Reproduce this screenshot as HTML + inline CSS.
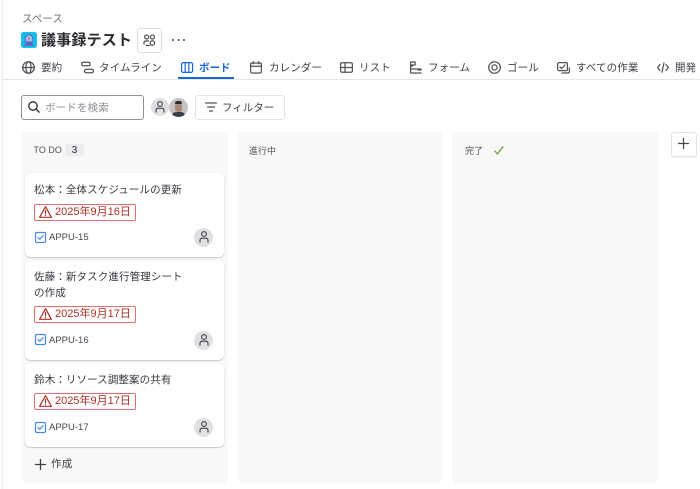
<!DOCTYPE html>
<html lang="ja"><head><meta charset="utf-8"><style>
html,body{margin:0;padding:0;width:700px;height:489px;overflow:hidden;background:#fff}
body{position:relative;font-family:"Liberation Sans","Noto Sans CJK JP",sans-serif;color:#3c3f45;filter:blur(.3px)}
.a{position:absolute;white-space:nowrap}
svg{position:absolute;overflow:visible;fill:none;stroke-linecap:round;stroke-linejoin:round}
.tab{font-size:10.5px;line-height:14px;top:61px;color:#3c3f45;letter-spacing:.1px}
.i{stroke:#505258;stroke-width:1.25}
.col{position:absolute;top:132px;height:351px;background:#f8f8f8;border-radius:6px}
.card{position:absolute;left:25px;width:199px;background:#fff;border-radius:5px;box-shadow:0 1px 1px #0000002e,0 0 1px #00000022}
.t{position:absolute;left:9px;font-size:10.5px;line-height:15px;color:#36393f;letter-spacing:.12px;white-space:nowrap}
.due{position:absolute;left:9px;width:100px;height:15px;border:1px solid #e0716a;border-radius:2px;color:#ae2e24;font-size:11px;line-height:15px;}
.due span{position:absolute;left:20px;top:0;white-space:nowrap}
.id{position:absolute;left:24px;font-size:9.5px;line-height:12px;color:#44474d;white-space:nowrap}
.av{position:absolute;left:169px;width:19px;height:19px;border-radius:50%;background:#dfe0e2}
.hd{font-size:9px;line-height:12px;color:#505258;top:145px}
</style></head><body>
<div class="a" style="left:2px;top:0;width:1px;height:489px;background:#ececee"></div>
<div class="a" style="left:2px;top:79px;width:698px;height:1px;background:#e4e5e7"></div>
<div class="a" style="left:22px;top:13px;font-size:10.5px;line-height:13px;color:#6b6e76">スペース</div>

<svg style="left:21px;top:32px" width="16" height="16" viewBox="0 0 16 16"><rect width="16" height="16" rx="2.5" fill="#12c2e6"/><path d="M2.500 13.500c1.500-.5 2.500-3.500 5.500-3.500s4 3 5.500 3.500c-1 .8-2 .8-3 .3H5.500c-1 .5-2 .5-3-.3z" fill="#6a5cc0"/><path d="M4.200 6.500a3.800 3.800 0 1 1 7.600 0v3.500H4.200z" fill="#8fc4ec" stroke="#4f5ec4" stroke-width="1"/><circle cx="8" cy="6.500" r="1.500" fill="#e58a78"/></svg>
<div class="a" style="left:41px;top:31px;font-size:15px;line-height:20px;font-weight:700;color:#292a2e;letter-spacing:.2px">議事録テスト</div>
<div class="a" style="left:137px;top:28px;width:23px;height:23px;border:1px solid #dddee1;border-radius:3px"></div>
<svg class="i" style="left:143px;top:34px" width="13" height="13" viewBox="0 0 13 13"><circle cx="3.600" cy="3" r="2"/><circle cx="9.400" cy="3" r="2"/><circle cx="9.400" cy="9" r="2.200"/><path d="M1 10V8.500C1 7.500 2 7 3 7h2.500M3 11.500h3.500"/></svg>
<div class="a" style="left:172px;top:39px;width:2.200px;height:2.200px;border-radius:50%;background:#44474d;box-shadow:5.500px 0 #44474d,11px 0 #44474d"></div>

<svg class="i" style="left:22px;top:61px" width="13" height="13" viewBox="0 0 13 13"><circle cx="6.500" cy="6.500" r="5.800"/><ellipse cx="6.500" cy="6.500" rx="2.600" ry="5.800"/><path d="M.7 6.500h11.600"/></svg>
<div class="a tab" style="left:41px">要約</div>
<svg class="i" style="left:81px;top:61px" width="13" height="13" viewBox="0 0 13 13"><rect x=".6" y="1.200" width="8.500" height="3.600" rx="1.600"/><rect x="3.600" y="8.200" width="8.800" height="3.600" rx="1.600"/></svg>
<div class="a tab" style="left:99px">タイムライン</div>
<svg style="left:181px;top:62px;stroke:#1868db;stroke-width:1.2" width="12" height="11" viewBox="0 0 12 11"><rect x=".6" y=".6" width="11" height="9.800" rx="1.600"/><path d="M4.200.6v9.800M7.800.6v9.800"/></svg>
<div class="a tab" style="left:199px;color:#1868db;font-weight:700;letter-spacing:0">ボード</div>
<div class="a" style="left:178px;top:77px;width:56px;height:2px;background:#1868db"></div>
<svg class="i" style="left:250px;top:61px" width="12" height="13" viewBox="0 0 12 13"><rect x=".6" y="2" width="10.800" height="10" rx="1.400"/><path d="M.6 5.200h10.800M3.300.6v2.200M8.700.6v2.200"/></svg>
<div class="a tab" style="left:269px">カレンダー</div>
<svg class="i" style="left:340px;top:62px" width="13" height="11" viewBox="0 0 13 11"><rect x=".6" y=".8" width="11.800" height="9.400" rx="1.400"/><path d="M.6 5.500h11.800M5 .8v9.400"/></svg>
<div class="a tab" style="left:359px">リスト</div>
<svg class="i" style="left:410px;top:61px" width="12" height="13" viewBox="0 0 12 13"><path d="M.6 1h4.500v3H.6zM.6 5h2M.6 5v3h10.500M.6 9v3h10.500M8 9h3.100"/></svg>
<div class="a tab" style="left:428px">フォーム</div>
<svg class="i" style="left:488px;top:61px" width="13" height="13" viewBox="0 0 13 13"><circle cx="6.500" cy="6.500" r="5.800"/><circle cx="6.500" cy="6.500" r="2.600"/></svg>
<div class="a tab" style="left:507px">ゴール</div>
<svg class="i" style="left:557px;top:62px" width="13" height="12" viewBox="0 0 13 12"><rect x=".6" y=".6" width="9.800" height="8" rx="1.400"/><path d="M3 5l1.600 1.600L8 3M5 11h6.400l1-1V6"/></svg>
<div class="a tab" style="left:576px">すべての作業</div>
<svg class="i" style="left:657px;top:62px" width="12" height="11" viewBox="0 0 12 11"><path d="M3 2.500L.6 5.500 3 8.500M9 2.500l2.400 3-2.400 3M7 .8L5 10.200"/></svg>
<div class="a tab" style="left:675px">開発</div>

<div class="a" style="left:21px;top:95px;width:121px;height:23px;border:1px solid #8c8f97;border-radius:3px"></div>
<svg style="left:28px;top:101px;stroke:#292a2e;stroke-width:1.3" width="12" height="12" viewBox="0 0 12 12"><circle cx="5" cy="5" r="4.200"/><path d="M8 8l3.200 3.200"/></svg>
<div class="a" style="left:45px;top:101px;font-size:10.5px;line-height:14px;color:#8c8f97;letter-spacing:.15px">ボードを検索</div>

<div class="a" style="left:151px;top:98px;width:18px;height:18px;border-radius:50%;background:#dfe0e2"></div>
<svg class="i" style="left:155px;top:101px" width="10" height="12" viewBox="0 0 10 12"><circle cx="5" cy="3" r="2.400"/><path d="M1 11V9.500C1 8 2 7.200 3.200 7.200h3.600C8 7.200 9 8 9 9.500V11"/></svg>
<div class="a" style="left:169px;top:98px;width:19px;height:19px;border-radius:50%;background:#c4c4c2;overflow:hidden">
<div class="a" style="left:3px;top:14px;width:13px;height:6px;background:#3a3f4c;border-radius:4px 4px 0 0"></div>
<div class="a" style="left:6px;top:5px;width:7px;height:9px;background:#a98a76;border-radius:3px"></div>
<div class="a" style="left:6px;top:3px;width:7px;height:3px;background:#2b2c30;border-radius:3px 3px 1px 1px"></div></div>

<div class="a" style="left:195px;top:95px;width:88px;height:23px;border:1px solid #e2e3e5;border-radius:3px"></div>
<svg class="i" style="left:205px;top:102px" width="12" height="10" viewBox="0 0 12 10"><path d="M.6 1h10.800M2.600 5h6.800M4.600 9h2.800"/></svg>
<div class="a" style="left:222px;top:101px;font-size:10.5px;line-height:14px;color:#3c3f45">フィルター</div>

<div class="col" style="left:21px;width:207px"></div>
<div class="col" style="left:237px;width:206px"></div>
<div class="col" style="left:452px;width:207px"></div>
<div class="a hd" style="left:33.500px;top:144px">TO DO</div>
<div class="a" style="left:65px;top:144px;width:19px;height:12px;background:#ebecee;border-radius:2px;font-size:10px;line-height:13px;text-align:center;color:#292a2e">3</div>
<div class="a hd" style="left:249px">進行中</div>
<div class="a hd" style="left:465px">完了</div>
<svg style="left:494px;top:146px;stroke:#6a9a23;stroke-width:1.2" width="10" height="9" viewBox="0 0 10 9"><path d="M.8 5l2.600 3L9 .8"/></svg>
<div class="a" style="left:671px;top:132px;width:24px;height:23px;border:1px solid #e2e3e5;border-radius:3px;box-shadow:0 1px 1px #0000000f"></div>
<svg style="left:678px;top:138px;stroke:#44474d;stroke-width:1.2" width="11" height="11" viewBox="0 0 11 11"><path d="M5.500.5v10M.5 5.500h10"/></svg>

<div class="card" style="top:173px;height:84px">
<div class="t" style="top:10px">松本：全体スケジュールの更新</div>
<div class="due" style="top:31px"><span>2025年9月16日</span><svg style="left:4px;top:1px;stroke:#ae2e24;stroke-width:1.2" width="13" height="12" viewBox="0 0 13 12"><path d="M6.500.7L12.400 11.300H.6zM6.500 4.400v3.400M6.500 9.300v.2"/></svg></div>
<svg style="left:10px;top:59px;stroke:#4688ec;stroke-width:1.2" width="11" height="11" viewBox="0 0 11 11"><rect x=".5" y=".5" width="10" height="10" rx="1.400"/><path d="M3 5.600l1.800 1.800L8 3.600"/></svg>
<div class="id" style="top:59px">APPU-15</div>
<div class="av" style="top:55px"></div><svg class="i" style="left:174px;top:58px" width="10" height="12" viewBox="0 0 10 12"><circle cx="5" cy="3" r="2.400"/><path d="M1 11V9.500C1 8 2 7.200 3.200 7.200h3.600C8 7.200 9 8 9 9.500V11"/></svg>
</div>

<div class="card" style="top:260px;height:100px">
<div class="t" style="top:10px;line-height:15.500px">佐藤：新タスク進行管理シート<br>の作成</div>
<div class="due" style="top:46px"><span>2025年9月17日</span><svg style="left:4px;top:1px;stroke:#ae2e24;stroke-width:1.2" width="13" height="12" viewBox="0 0 13 12"><path d="M6.500.7L12.400 11.300H.6zM6.500 4.400v3.400M6.500 9.300v.2"/></svg></div>
<svg style="left:10px;top:74px;stroke:#4688ec;stroke-width:1.2" width="11" height="11" viewBox="0 0 11 11"><rect x=".5" y=".5" width="10" height="10" rx="1.400"/><path d="M3 5.600l1.800 1.800L8 3.600"/></svg>
<div class="id" style="top:75px">APPU-16</div>
<div class="av" style="top:71px"></div><svg class="i" style="left:174px;top:74px" width="10" height="12" viewBox="0 0 10 12"><circle cx="5" cy="3" r="2.400"/><path d="M1 11V9.500C1 8 2 7.200 3.200 7.200h3.600C8 7.200 9 8 9 9.500V11"/></svg>
</div>

<div class="card" style="top:363px;height:84px">
<div class="t" style="top:10px">鈴木：リソース調整案の共有</div>
<div class="due" style="top:30px"><span>2025年9月17日</span><svg style="left:4px;top:1px;stroke:#ae2e24;stroke-width:1.2" width="13" height="12" viewBox="0 0 13 12"><path d="M6.500.7L12.400 11.300H.6zM6.500 4.400v3.400M6.500 9.300v.2"/></svg></div>
<svg style="left:10px;top:59px;stroke:#4688ec;stroke-width:1.2" width="11" height="11" viewBox="0 0 11 11"><rect x=".5" y=".5" width="10" height="10" rx="1.400"/><path d="M3 5.600l1.800 1.800L8 3.600"/></svg>
<div class="id" style="top:59px">APPU-17</div>
<div class="av" style="top:55px"></div><svg class="i" style="left:174px;top:58px" width="10" height="12" viewBox="0 0 10 12"><circle cx="5" cy="3" r="2.400"/><path d="M1 11V9.500C1 8 2 7.200 3.200 7.200h3.600C8 7.200 9 8 9 9.500V11"/></svg>
</div>

<svg style="left:35px;top:459px;stroke:#3f4248;stroke-width:1.3" width="11" height="11" viewBox="0 0 11 11"><path d="M5.500.5v10M.5 5.500h10"/></svg>
<div class="a" style="left:51px;top:457px;font-size:10.5px;line-height:14px;color:#3c3f45;letter-spacing:.2px">作成</div>
</body></html>
